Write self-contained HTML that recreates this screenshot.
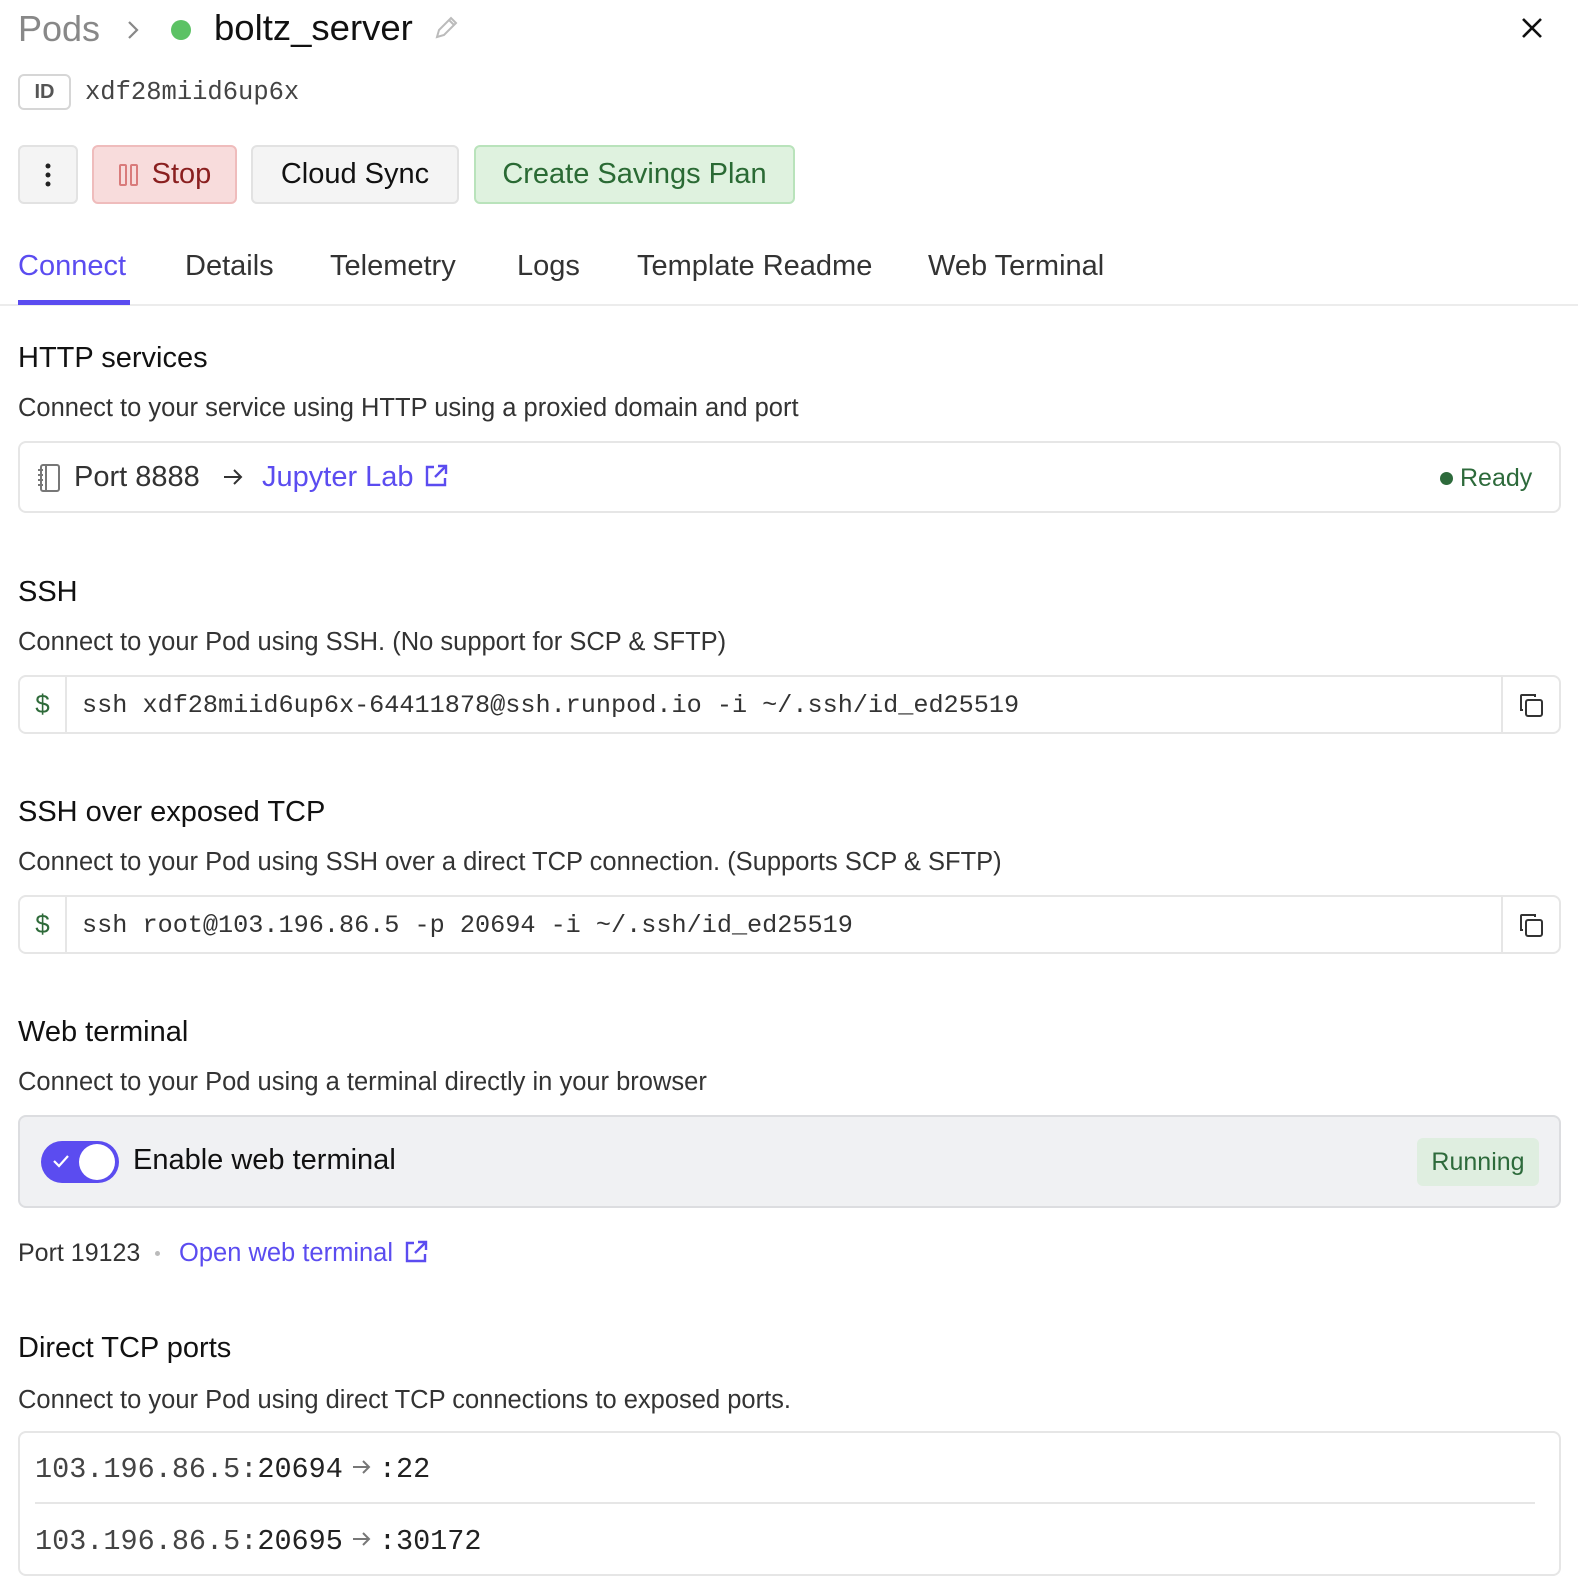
<!DOCTYPE html>
<html><head><meta charset="utf-8"><style>
*{box-sizing:border-box;margin:0;padding:0}
body{width:1578px;height:1596px;background:#fff;font-family:"Liberation Sans",sans-serif;color:#222;position:relative;overflow:hidden}
.a{position:absolute;white-space:nowrap}
.mono{font-family:"Liberation Mono",monospace}
.h{font-size:29px;color:#111}
.d{font-size:25.5px;color:#333}
.btn{position:absolute;top:145px;height:59px;border-radius:6px;border:2px solid #e2e2e2;background:#f4f4f4;font-size:29px;display:flex;align-items:center;justify-content:center}
.box{position:absolute;left:18px;width:1543px;border:2px solid #e6e6e6;border-radius:8px}
.cmd{height:59px}
.cmd .dl{position:absolute;left:0;top:0;width:47px;height:100%;border-right:2px solid #e6e6e6;color:#2f6b3a;font-size:26px;display:flex;align-items:center;justify-content:center}
.cmd .cp{position:absolute;right:0;top:0;width:58px;height:100%;border-left:2px solid #e6e6e6;display:flex;align-items:center;justify-content:center}
.cmd .t{position:absolute;left:62px;top:1px;line-height:55px;font-size:25.2px;color:#333}
.tab{position:absolute;top:250px;font-size:29px;color:#333;white-space:nowrap}
</style></head><body>
<div class="a" style="left:18px;top:8px;font-size:36px;color:#888">Pods</div>
<svg class="a" style="left:125px;top:20px" width="16" height="20" viewBox="0 0 16 20"><path d="M4 2l8 8-8 8" fill="none" stroke="#888" stroke-width="2.2"/></svg>
<div class="a" style="left:171px;top:20px;width:20px;height:20px;border-radius:50%;background:#5cc264"></div>
<div class="a" style="left:214px;top:7px;font-size:36.5px;color:#111">boltz_server</div>
<svg class="a" style="left:432px;top:14px" width="28" height="28" viewBox="0 0 28 28"><path d="M5 23l2-7L19 4l5 5-12 12z M17 6l5 5" fill="none" stroke="#bbb" stroke-width="2"/></svg>
<svg class="a" style="left:1520px;top:16px" width="24" height="24" viewBox="0 0 24 24"><path d="M3 3l18 18M21 3L3 21" stroke="#111" stroke-width="2.6"/></svg>
<div class="a" style="left:18px;top:74px;width:53px;height:36px;border:2px solid #d6d6d6;border-radius:6px;font-size:20px;font-weight:bold;color:#555;text-align:center;line-height:32px">ID</div>
<div class="a mono" style="left:85px;top:78px;font-size:25.5px;color:#444">xdf28miid6up6x</div>
<div class="btn" style="left:18px;width:60px"><svg width="6" height="24"><circle cx="3" cy="3" r="2.5" fill="#222"/><circle cx="3" cy="12" r="2.5" fill="#222"/><circle cx="3" cy="21" r="2.5" fill="#222"/></svg></div>
<div class="btn" style="left:92px;width:145px;background:#f8dcdc;border-color:#efbcbc;color:#8a1f1f"><svg width="22" height="24" style="margin-right:12px"><rect x="2" y="2" width="6" height="20" rx="1" fill="none" stroke="#d97b7b" stroke-width="2"/><rect x="13" y="2" width="6" height="20" rx="1" fill="none" stroke="#d97b7b" stroke-width="2"/></svg>Stop</div>
<div class="btn" style="left:251px;width:208px;color:#111">Cloud Sync</div>
<div class="btn" style="left:474px;width:321px;background:#dff2df;border-color:#b9e3bb;color:#2a6a34">Create Savings Plan</div>
<div class="tab" style="left:18px;color:#5b4cf0">Connect</div>
<div class="tab" style="left:185px">Details</div>
<div class="tab" style="left:330px">Telemetry</div>
<div class="tab" style="left:517px">Logs</div>
<div class="tab" style="left:637px">Template Readme</div>
<div class="tab" style="left:928px">Web Terminal</div>
<div class="a" style="left:0;top:304px;width:1578px;height:2px;background:#ececec"></div>
<div class="a" style="left:18px;top:300px;width:112px;height:5px;background:#5b4cf0"></div>

<div class="a h" style="left:18px;top:342px">HTTP services</div>
<div class="a d" style="left:18px;top:394px">Connect to your service using HTTP using a proxied domain and port</div>
<div class="box" style="top:441px;height:72px">
<svg class="a" style="left:16px;top:20px" width="26" height="30" viewBox="0 0 26 30"><rect x="5" y="2" width="18" height="26" rx="2" fill="none" stroke="#777" stroke-width="2"/><path d="M10 2v26M2 7h5M2 12h5M2 17h5M2 22h5" stroke="#777" stroke-width="2"/></svg>
<div class="a" style="left:54px;top:18px;font-size:29px;color:#333">Port 8888</div>
<svg class="a" style="left:202px;top:24px" width="22" height="20"><path d="M2 10h17M12 3l7 7-7 7" fill="none" stroke="#333" stroke-width="2"/></svg>
<div class="a" style="left:242px;top:18px;font-size:29px;color:#5b4cf0">Jupyter Lab</div>
<svg class="a" style="left:403px;top:20px" width="26" height="26" viewBox="0 0 26 26"><path d="M11 4H4v18h18v-7M15 3h8v8M23 3L12 14" fill="none" stroke="#5b4cf0" stroke-width="2.4"/></svg>
<div class="a" style="left:1420px;top:29px;width:13px;height:13px;border-radius:50%;background:#2d6a3b"></div>
<div class="a" style="left:1440px;top:21px;font-size:25px;color:#2d6a3b">Ready</div>
</div>

<div class="a h" style="left:18px;top:576px">SSH</div>
<div class="a d" style="left:18px;top:628px">Connect to your Pod using SSH. (No support for SCP &amp; SFTP)</div>
<div class="box cmd" style="top:675px"><div class="dl">$</div><div class="t mono">ssh xdf28miid6up6x-64411878@ssh.runpod.io -i ~/.ssh/id_ed25519</div><div class="cp"><svg width="28" height="28" viewBox="0 0 28 28"><path d="M6 19H4V5a1 1 0 0 1 1-1h13v2" fill="none" stroke="#333" stroke-width="2"/><rect x="9" y="9" width="16" height="16" rx="2" fill="none" stroke="#333" stroke-width="2"/></svg></div></div>

<div class="a h" style="left:18px;top:796px">SSH over exposed TCP</div>
<div class="a d" style="left:18px;top:848px">Connect to your Pod using SSH over a direct TCP connection. (Supports SCP &amp; SFTP)</div>
<div class="box cmd" style="top:895px"><div class="dl">$</div><div class="t mono">ssh root@103.196.86.5 -p 20694 -i ~/.ssh/id_ed25519</div><div class="cp"><svg width="28" height="28" viewBox="0 0 28 28"><path d="M6 19H4V5a1 1 0 0 1 1-1h13v2" fill="none" stroke="#333" stroke-width="2"/><rect x="9" y="9" width="16" height="16" rx="2" fill="none" stroke="#333" stroke-width="2"/></svg></div></div>

<div class="a h" style="left:18px;top:1016px">Web terminal</div>
<div class="a d" style="left:18px;top:1068px">Connect to your Pod using a terminal directly in your browser</div>
<div class="box" style="top:1115px;height:93px;background:#f0f1f3;border-color:#dcdde0">
<div class="a" style="left:21px;top:24px;width:78px;height:42px;border-radius:21px;background:#5b4cf0"><div class="a" style="left:38px;top:3px;width:36px;height:36px;border-radius:50%;background:#fff"></div><svg class="a" style="left:11px;top:12px" width="18" height="16"><path d="M2 8l5 5 9-10" fill="none" stroke="#fff" stroke-width="2.2"/></svg></div>
<div class="a" style="left:113px;top:27px;font-size:29px;color:#111">Enable web terminal</div>
<div class="a" style="left:1397px;top:21px;width:122px;height:48px;border-radius:6px;background:#dfeee0;color:#2d6a3b;font-size:25px;text-align:center;line-height:48px">Running</div>
</div>
<div class="a" style="left:18px;top:1239px;font-size:25px;color:#333">Port 19123</div>
<div class="a" style="left:155px;top:1251px;width:5px;height:5px;border-radius:50%;background:#bbb"></div>
<div class="a" style="left:179px;top:1239px;font-size:25.5px;color:#5b4cf0">Open web terminal</div>
<svg class="a" style="left:403px;top:1239px" width="26" height="26" viewBox="0 0 26 26"><path d="M11 4H4v18h18v-7M15 3h8v8M23 3L12 14" fill="none" stroke="#5b4cf0" stroke-width="2.4"/></svg>

<div class="a h" style="left:18px;top:1332px">Direct TCP ports</div>
<div class="a d" style="left:18px;top:1386px">Connect to your Pod using direct TCP connections to exposed ports.</div>
<div class="box" style="top:1431px;height:145px">
<div class="a mono" style="left:15px;top:20px;font-size:28.5px;color:#222"><span style="color:#444">103.196.86.5:</span>20694<svg width="28" height="20" style="margin:0 2px 0 6px" viewBox="0 0 28 20"><path d="M4 10h16M14 4l6 6-6 6" fill="none" stroke="#777" stroke-width="2"/></svg>:22</div>
<div class="a" style="left:15px;top:69px;width:1500px;height:2px;background:#e6e6e6"></div>
<div class="a mono" style="left:15px;top:92px;font-size:28.5px;color:#222"><span style="color:#444">103.196.86.5:</span>20695<svg width="28" height="20" style="margin:0 2px 0 6px" viewBox="0 0 28 20"><path d="M4 10h16M14 4l6 6-6 6" fill="none" stroke="#777" stroke-width="2"/></svg>:30172</div>
</div>
</body></html>
